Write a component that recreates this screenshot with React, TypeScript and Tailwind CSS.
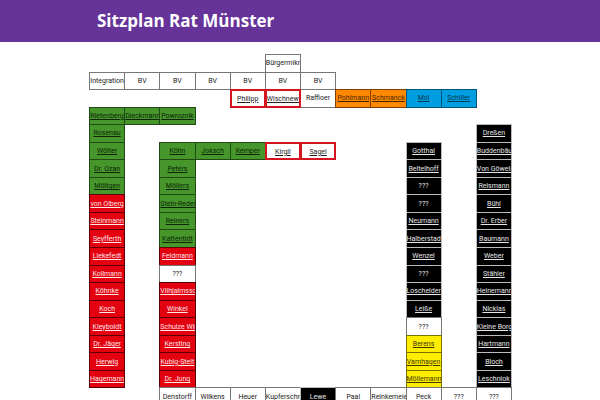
type Kind = "plain" | "ring" | "green" | "red" | "black" | "orange" | "blue" | "yellow";
type Seat = { col: number; row: number; name: string; kind: Kind; link: boolean };

const styles: Record<Kind, string> = {
  plain: "bg-white text-[#222] border-[#777] border",
  ring: "bg-white text-[#222] border-[#d4141f] border-2 z-10 pt-px",
  green: "bg-[#46962b] text-[#0c2607] border-[#1f4a12] border",
  red: "bg-[#e3000f] text-[#ffe6e6] border-[#5c0006] border",
  black: "bg-black text-[#e6e6e6] border-[#bbb] border",
  orange: "bg-[#ff8800] text-[#4a2800] border-[#7a4100] border",
  blue: "bg-[#009ee0] text-[#003a55] border-[#00557a] border",
  yellow: "bg-[#ffed00] text-[#3d3900] border-[#7a7200] border",
};

const seats: Seat[] = [];

function across(row: number, col: number, kind: Kind, names: string[], link = true) {
  names.forEach((name, i) => seats.push({ row, col: col + i, name, kind, link: link && name !== "???" }));
}
function down(row: number, col: number, kind: Kind, names: string[]) {
  names.forEach((name, i) => seats.push({ row: row + i, col, name, kind, link: name !== "???" }));
}

across(1, 6, "plain", ["Bürgermikr"], false);
across(2, 1, "plain", ["Integration", "BV", "BV", "BV", "BV", "BV", "BV"], false);
across(3, 5, "ring", ["Philipp", "Wischnews"]);
across(3, 7, "plain", ["Raffloer"], false);
across(3, 8, "orange", ["Pohlmann", "Schmanck"]);
across(3, 10, "blue", ["Mol", "Schiller"]);
across(4, 1, "green", ["Rietenberg", "Dieckmann", "Powroznik"]);
down(5, 1, "green", ["Rosenau", "Wölter", "Dr. Ozan", "Möltgen"]);
down(9, 1, "red", ["von Olberg", "Steinmann", "Seyfferth", "Liekefedt", "Kollmann", "Köhnke", "Koch", "Kleyboldt", "Dr. Jäger", "Herwig", "Hagemann"]);
across(6, 3, "green", ["Köhn", "Joksch", "Kemper"]);
across(6, 6, "ring", ["Kirgil", "Sagel"]);
down(7, 3, "green", ["Peters", "Möllers", "Stein-Reder", "Reiners", "Kattentidt"]);
down(12, 3, "red", ["Feldmann"]);
down(13, 3, "plain", ["???"]);
down(14, 3, "red", ["Vilhjalmsso", "Winkel", "Schulze Win", "Kersting", "Kubig-Stelt", "Dr. Jung"]);
down(6, 10, "black", ["Gotthal", "Beitelhoff", "???", "???", "Neumann", "Halberstadt", "Wenzel", "???", "Loschelder", "Leiße"]);
down(16, 10, "plain", ["???"]);
down(17, 10, "yellow", ["Berens", "Varnhagen", "Möllemann"]);
down(5, 12, "black", ["Dreßen", "Buddenbäu", "Von Göwels", "Reismann", "Bühl", "Dr. Erber", "Baumann", "Weber", "Stähler", "Heinemann", "Nicklas", "Kleine Borg", "Hartmann", "Bloch", "Leschniok"]);
across(20, 3, "plain", ["Denstorff", "Wilkens", "Heuer", "Kupferschm"]);
across(20, 7, "black", ["Lewe"]);
across(20, 8, "plain", ["Paal", "Reinkemeie", "Peck", "???", "???"]);

export default function App() {
  return (
    <div className="h-screen overflow-hidden bg-white font-['Open_Sans',sans-serif]">
      <header className="bg-[#663399] px-[97px] py-2">
        <h1 className="text-[17px] leading-[26px] font-bold whitespace-nowrap text-white">Sitzplan Rat Münster</h1>
      </header>
      <main className="mx-auto mt-3 grid h-[351px] max-w-[422px] grid-cols-12 grid-rows-[repeat(20,minmax(0,1fr))] font-['Roboto',sans-serif]">
        {seats.map((s) => (
          <div
            key={`${s.row}-${s.col}`}
            style={{ gridColumn: s.col, gridRow: s.row }}
            className={`-mr-px -mb-px flex min-w-0 items-center justify-center-safe overflow-hidden text-[7px] leading-3 whitespace-nowrap ${styles[s.kind]}`}
          >
            {s.link ? <a href="#" className="underline">{s.name}</a> : <span>{s.name}</span>}
          </div>
        ))}
      </main>
    </div>
  );
}
